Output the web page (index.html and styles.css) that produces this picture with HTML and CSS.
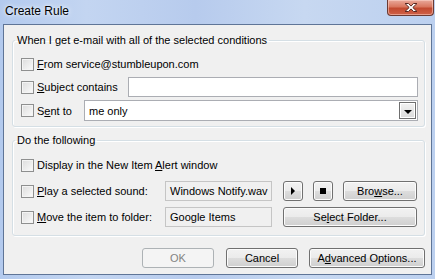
FILE: index.html
```html
<!DOCTYPE html>
<html lang="en">
<head>
    <meta charset="UTF-8">
    <title>Create Rule</title>
    <link rel="stylesheet" href="styles.css">
</head>
<body>
    <div class="window">
        <div class="titlebar">
            <span class="title">Create Rule</span>
            <div class="close">
                <svg width="16" height="11" viewBox="0 0 16 11">
                    <path d="M2 1.5h3.5l2.5 2.6 2.5-2.6h3.5l-4.2 4 4.2 4h-3.5l-2.5-2.6-2.5 2.6h-3.5l4.2-4z" fill="#fff" stroke="#5a2a24" stroke-width="1" stroke-linejoin="round"/>
                </svg>
            </div>
        </div>
        <div class="client">
            <fieldset class="group group-when">
                <legend>When I get e-mail with all of the selected conditions</legend>
                <div class="row">
                    <label class="check"><span class="box"></span><span><u>F</u>rom service@stumbleupon.com</span></label>
                </div>
                <div class="row">
                    <label class="check subject"><span class="box"></span><span><u>S</u>ubject contains</span></label>
                    <div class="textbox grow"></div>
                </div>
                <div class="row">
                    <label class="check sent"><span class="box"></span><span>S<u>e</u>nt to</span></label>
                    <div class="combo grow">
                        <span>me only</span>
                        <span class="drop"><span class="arrow"></span></span>
                    </div>
                </div>
            </fieldset>
            <fieldset class="group group-do">
                <legend>Do the following</legend>
                <div class="row">
                    <label class="check"><span class="box"></span><span>Display in the New Item <u>A</u>lert window</span></label>
                </div>
                <div class="row">
                    <label class="check wide"><span class="box"></span><span><u>P</u>lay a selected sound:</span></label>
                    <div class="textbox readonly">Windows Notify.wav</div>
                    <button class="btn icon"><span class="play"></span></button>
                    <button class="btn icon"><span class="stop"></span></button>
                    <button class="btn browse">Bro<u>w</u>se...</button>
                </div>
                <div class="row">
                    <label class="check wide"><span class="box"></span><span><u>M</u>ove the item to folder:</span></label>
                    <div class="textbox readonly">Google Items</div>
                    <button class="btn folder">Se<u>l</u>ect Folder...</button>
                </div>
            </fieldset>
            <div class="actions">
                <button class="btn dialog" disabled>OK</button>
                <button class="btn dialog">Cancel</button>
                <button class="btn advanced">A<u>d</u>vanced Options...</button>
            </div>
        </div>
    </div>
</body>
</html>
```
FILE: styles.css
```css
body {
    margin: 0;
    font-family: "Liberation Sans", Arial, sans-serif;
    font-size: 11px;
    color: #000;
    background-color: #a9c2ea;
}

.window {
    width: 435px;
    height: 279px;
    display: flex;
    flex-direction: column;
    background: linear-gradient(to right, #b3caee 0%, #c3d5f1 20%, #b7cbed 45%, #c7d8f1 70%, #bcd0ef 100%);
}

.titlebar {
    height: 24px;
    display: flex;
    justify-content: space-between;
    align-items: flex-start;
}

.title {
    margin: 3px 0 0 5px;
    font-size: 12px;
    line-height: 17px;
    text-shadow: 0 0 6px #eef4fc, 0 0 3px #eef4fc;
}

.close {
    width: 47px;
    height: 16px;
    margin-right: 1px;
    border: 1px solid #6b3a33;
    border-top: none;
    border-radius: 0 0 4px 4px;
    background: linear-gradient(#e9a99b 0%, #d9775f 45%, #c24a30 55%, #cf6148 100%);
    box-shadow: inset 0 0 0 1px rgba(255, 220, 210, 0.5);
    display: flex;
    align-items: center;
    justify-content: center;
    box-sizing: border-box;
}

.client {
    flex: 1;
    margin: 0 3px 4px 3px;
    border: 1px solid #5f7597;
    background-color: #f0f0f0;
    padding: 7px 6px 6px 8px;
    display: flex;
    flex-direction: column;
}

.group {
    margin: 0;
    border: 1px solid #d5dfe5;
    border-radius: 3px;
    box-shadow: 1px 1px 0 #fff, inset 1px 1px 0 #fff;
    display: flex;
    flex-direction: column;
    min-width: 0;
}

.group legend {
    padding: 0 2px;
    margin-left: -6px;
    line-height: 16px;
}

.group-when {
    padding: 6px 6px 5px 8px;
    gap: 3px;
}

.group-when .row:last-child {
    height: 21px;
}

.group-do {
    margin-top: 5px;
    padding: 7px 6px 8px 8px;
    gap: 6px;
}

.row {
    height: 20px;
    display: flex;
    align-items: center;
}

.check {
    display: flex;
    align-items: center;
    gap: 3px;
    white-space: nowrap;
    flex-shrink: 0;
}

.subject {
    width: 107px;
}

.sent {
    width: 63px;
}

.wide {
    width: 144px;
}

.box {
    width: 13px;
    height: 13px;
    flex-shrink: 0;
    box-sizing: border-box;
    border: 1px solid #8e8f8f;
    background: linear-gradient(135deg, #dcdcdc, #fbfbfb);
    box-shadow: inset 0 0 0 1px #f4f4f4;
}

.textbox {
    height: 20px;
    box-sizing: border-box;
    border: 1px solid #abadb3;
    background-color: #fff;
    padding: 0 4px;
    line-height: 18px;
}

.textbox.readonly {
    width: 107px;
    flex-shrink: 0;
    background-color: #f0f0f0;
    border-color: #c5c5c5;
    white-space: nowrap;
    overflow: hidden;
}

.grow {
    flex: 1;
}

.combo {
    height: 21px;
    box-sizing: border-box;
    border: 1px solid #abadb3;
    background-color: #fff;
    padding: 0 1px 0 4px;
    display: flex;
    align-items: center;
    justify-content: space-between;
}

.drop {
    width: 17px;
    height: 17px;
    box-sizing: border-box;
    border: 1px solid #6f6f6f;
    background: linear-gradient(#f2f2f2, #dadada);
    box-shadow: inset 0 0 0 1px #fff;
    display: flex;
    align-items: center;
    justify-content: center;
}

.arrow {
    width: 0;
    height: 0;
    border-left: 4px solid transparent;
    border-right: 4px solid transparent;
    border-top: 4px solid #000;
    margin-top: 2px;
}

.btn {
    height: 20px;
    flex-shrink: 0;
    box-sizing: border-box;
    border: 1px solid #707070;
    border-radius: 3px;
    background: linear-gradient(#f2f2f2 0%, #ebebeb 50%, #dddddd 51%, #cfcfcf 100%);
    box-shadow: inset 0 0 0 1px #fcfcfc;
    font-family: inherit;
    font-size: 11px;
    color: #000;
    padding: 0;
    display: flex;
    align-items: center;
    justify-content: center;
}

.btn.icon {
    width: 20px;
    margin-left: 10px;
}

.btn.icon:first-of-type {
    margin-left: 11px;
}

.play {
    width: 0;
    height: 0;
    border-top: 4px solid transparent;
    border-bottom: 4px solid transparent;
    border-left: 4px solid #000;
}

.stop {
    width: 6px;
    height: 6px;
    background-color: #000;
}

.browse {
    width: 74px;
    margin-left: 10px;
}

.folder {
    width: 134px;
    margin-left: 11px;
}

.actions {
    margin-top: auto;
    display: flex;
    justify-content: flex-end;
    gap: 12px;
}

.dialog {
    width: 72px;
}

.dialog:disabled {
    border-color: #adb2b5;
    background: #f4f4f4;
    color: #838383;
    box-shadow: none;
}

.advanced {
    width: 116px;
    margin-left: -1px;
}
```
